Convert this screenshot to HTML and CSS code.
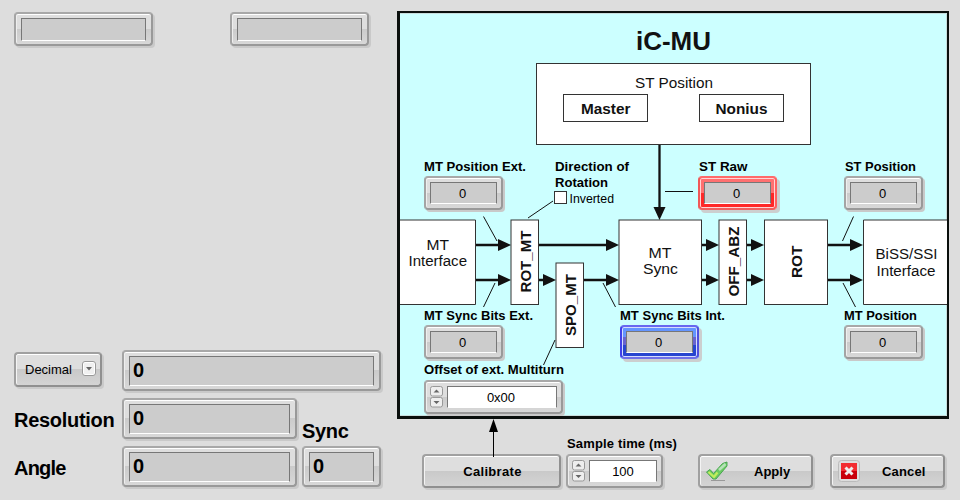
FILE: index.html
```html
<!DOCTYPE html>
<html lang="en">
<head>
<meta charset="utf-8">
<title>iC-MU Calibration</title>
<link rel="stylesheet" href="styles.css">
</head>
<body>
<main class="window">
  <section class="readouts">
    <div class="row top-row">
      <div class="field wide"><div class="inset"></div></div>
      <div class="field wide"><div class="inset"></div></div>
    </div>
    <div class="row format-row">
      <button class="btn format">Decimal
        <svg class="drop" width="14" height="15" viewBox="0 0 14 15"><rect x=".5" y=".5" width="13" height="14" rx="2.5" fill="#fff" stroke="#999"/><rect x="2" y="2" width="10" height="11" rx="1" fill="#f0f0f0"/><path d="M4 6h6l-3 3.5z" fill="#666"/></svg>
      </button>
      <div class="field big full"><div class="inset">0</div></div>
    </div>
    <div class="row resolution-row">
      <h2 class="caption resolution">Resolution</h2>
      <div class="field big medium"><div class="inset">0</div></div>
      <h2 class="caption sync">Sync</h2>
    </div>
    <div class="row angle-row">
      <h2 class="caption angle">Angle</h2>
      <div class="field big medium"><div class="inset">0</div></div>
      <div class="field big small"><div class="inset">0</div></div>
    </div>
  </section>

  <section class="right">
    <div class="diagram">
      <svg class="wiring" width="552" height="408" viewBox="397 11 552 408">
        <defs>
          <path id="head" d="M0 0L-13-6V6z" fill="#111"/>
        </defs>
        <rect x="397" y="11" width="552" height="408" fill="#0a0f0d"/>
        <rect x="400" y="13" width="547" height="403" fill="#cff"/>
        <path d="M400 13.5H946.500V415.500H400" fill="none" stroke="#c8dedd"/>
        <g class="box">
          <rect x="536.5" y="63.500" width="274" height="81"/>
          <rect x="563.500" y="94.500" width="84" height="27"/>
          <rect x="699.500" y="94.500" width="84" height="27"/>
          <path d="M400 220H475.500V304.500H400"/>
          <rect x="511" y="220" width="27.500" height="84.500"/>
          <rect x="556" y="263" width="27.500" height="84.500"/>
          <rect x="619" y="220" width="82.500" height="84.500"/>
          <rect x="719" y="220" width="27.500" height="84.500"/>
          <rect x="764.500" y="220" width="63" height="84.500"/>
          <path d="M947 220H863.500V304.500H947"/>
        </g>
        <path class="bus" d="M476 245H500M539 245H610M702 245H708M747 245H753M828 245H853M476 280H500M539 280H545M584 280H610M702 280H708M747 280H753M828 280H853M659.500 145V208"/>
        <use href="#head" x="511" y="245"/><use href="#head" x="619" y="245"/><use href="#head" x="719" y="245"/><use href="#head" x="764" y="245"/><use href="#head" x="863" y="245"/>
        <use href="#head" x="511" y="280"/><use href="#head" x="556" y="280"/><use href="#head" x="619" y="280"/><use href="#head" x="719" y="280"/><use href="#head" x="764" y="280"/><use href="#head" x="863" y="280"/>
        <use href="#head" transform="translate(659.500 220) rotate(90)"/>
        <path class="lead" d="M483.500 216.500L497 241M553 201L528 218M665 191.500H693M495 283L483.500 307M603 283L615.500 307M853.500 216.500L842.500 241M843 283L855.500 307M555 340L543.500 365"/>
        <g class="block">
          <text x="636" y="50" class="title" textLength="75" lengthAdjust="spacingAndGlyphs">iC-MU</text>
          <text x="635" y="88" textLength="78" lengthAdjust="spacingAndGlyphs">ST Position</text>
          <text x="426.500" y="250" textLength="22.500" lengthAdjust="spacingAndGlyphs">MT</text>
          <text x="408.500" y="266" textLength="58.500" lengthAdjust="spacingAndGlyphs">Interface</text>
          <text x="648.500" y="258" textLength="23" lengthAdjust="spacingAndGlyphs">MT</text>
          <text x="643" y="274" textLength="35" lengthAdjust="spacingAndGlyphs">Sync</text>
          <text x="875.500" y="259" textLength="62" lengthAdjust="spacingAndGlyphs">BiSS/SSI</text>
          <text x="876.500" y="276" textLength="59" lengthAdjust="spacingAndGlyphs">Interface</text>
        </g>
        <g class="block strong">
          <text x="581" y="114" textLength="49.500" lengthAdjust="spacingAndGlyphs">Master</text>
          <text x="715.500" y="114" textLength="52" lengthAdjust="spacingAndGlyphs">Nonius</text>
          <text transform="translate(531 292.500) rotate(-90)" textLength="62" lengthAdjust="spacingAndGlyphs">ROT_MT</text>
          <text transform="translate(576 336) rotate(-90)" textLength="62" lengthAdjust="spacingAndGlyphs">SPO_MT</text>
          <text transform="translate(738.500 296.500) rotate(-90)" textLength="70" lengthAdjust="spacingAndGlyphs">OFF_ABZ</text>
          <text transform="translate(801.500 278) rotate(-90)" textLength="32.500" lengthAdjust="spacingAndGlyphs">ROT</text>
        </g>
        <g class="label">
          <text x="424" y="171" textLength="102" lengthAdjust="spacingAndGlyphs">MT Position Ext.</text>
          <text x="555" y="171" textLength="74" lengthAdjust="spacingAndGlyphs">Direction of</text>
          <text x="555" y="187" textLength="53" lengthAdjust="spacingAndGlyphs">Rotation</text>
          <text x="699" y="171" textLength="48.500" lengthAdjust="spacingAndGlyphs">ST Raw</text>
          <text x="845" y="171" textLength="71" lengthAdjust="spacingAndGlyphs">ST Position</text>
          <text x="424" y="320" textLength="109" lengthAdjust="spacingAndGlyphs">MT Sync Bits Ext.</text>
          <text x="620" y="320" textLength="105" lengthAdjust="spacingAndGlyphs">MT Sync Bits Int.</text>
          <text x="844" y="320" textLength="73" lengthAdjust="spacingAndGlyphs">MT Position</text>
          <text x="424" y="374" textLength="140" lengthAdjust="spacingAndGlyphs">Offset of ext. Multiturn</text>
        </g>
        <rect x="554.500" y="191.500" width="12" height="12" fill="#fff" stroke="#333"/>
        <text class="check-label" x="569.500" y="203" textLength="44.500" lengthAdjust="spacingAndGlyphs">Inverted</text>
      </svg>
      <div class="field node mt-pos-ext"><div class="inset">0</div></div>
      <div class="field node st-raw red"><div class="inset">0</div></div>
      <div class="field node st-pos"><div class="inset">0</div></div>
      <div class="field node mt-sync-ext"><div class="inset">0</div></div>
      <div class="field node mt-sync-int blue"><div class="inset">0</div></div>
      <div class="field node mt-pos"><div class="inset">0</div></div>
      <div class="field node offset editable">
        <svg class="spin" width="13" height="22" viewBox="0 0 13 22"><g fill="#eee" stroke="#999"><rect x=".5" y=".5" width="12" height="9.500" rx="2"/><rect x=".5" y="11.500" width="12" height="9.500" rx="2"/></g><path d="M3.500 6.500h6l-3-3zM3.500 15h6l-3 3z" fill="#666"/></svg>
        <div class="inset">0x00</div>
      </div>
    </div>
    <div class="toolbar">
      <button class="btn calibrate">Calibrate</button>
      <div class="sample">
        <div class="sample-label">Sample time (ms)</div>
        <div class="field editable sample-field">
          <svg class="spin" width="13" height="22" viewBox="0 0 13 22"><g fill="#eee" stroke="#999"><rect x=".5" y=".5" width="12" height="9.500" rx="2"/><rect x=".5" y="11.500" width="12" height="9.500" rx="2"/></g><path d="M3.500 6.500h6l-3-3zM3.500 15h6l-3 3z" fill="#666"/></svg>
          <div class="inset">100</div>
        </div>
      </div>
      <button class="btn apply">
        <svg width="24" height="22" viewBox="0 0 24 22"><path d="M6 20.500H20" stroke="#999" stroke-width="1"/><path d="M1.500 12L5 9.500L8.500 13.500L17.500 3.500L22 2V6L11 19H8z" fill="#6bcb62" stroke="#4aa552"/><path d="M3.500 12L9 17L12.500 12.500" fill="none" stroke="#c2ee5c" stroke-width="2.200"/><path d="M14 10L20.500 4" stroke="#b5e2b8" stroke-width="2.500"/></svg>
        <span>Apply</span>
      </button>
      <button class="btn cancel">
        <svg width="22" height="22" viewBox="0 0 22 22"><rect x=".5" y=".5" width="21" height="21" rx="3" fill="#ddd" stroke="#bbb"/><rect x="3" y="3" width="16" height="16" fill="#c9000b"/><rect x="3" y="3" width="16" height="8" fill="#f22c31"/><path d="M7.500 7.500L14.500 14.500M14.500 7.500L7.500 14.500" stroke="#eee" stroke-width="3"/></svg>
        <span>Cancel</span>
      </button>
      <svg class="up-arrow" width="12" height="38" viewBox="0 0 12 38"><path d="M6.500 8V38" stroke="#000"/><path d="M6.500 0L11 13H2z"/></svg>
    </div>
  </section>
</main>
</body>
</html>
```
FILE: styles.css
```css
* { box-sizing: border-box; }
body {
  margin: 0;
  background: #ddd;
  color: #000;
  font-family: "Liberation Sans", Arial, sans-serif;
  font-size: 13px;
}
.window {
  display: flex;
  width: 960px;
  height: 500px;
  overflow: hidden;
}
.readouts {
  width: 397px;
  flex: none;
  padding: 12px 0 0 14px;
}
.row { display: flex; }
.top-row { gap: 77px; height: 338px; align-items: flex-start; }
.format-row { gap: 20px; height: 48px; align-items: flex-start; }
.format-row .btn { margin-top: 2px; }
.resolution-row { height: 48px; }
.angle-row { height: 42px; }

/* Raised frame with a sunken value area */
.field {
  display: flex;
  flex: none;
  height: 34px;
  padding: 4px 5px 3px;
  border: 2px solid #a4a4a4;
  border-color: #a8a8a8 #999 #999 #a4a4a4;
  border-radius: 4px;
  background: linear-gradient(#dedede 50%, #cbcbcb 50%, #d8d8d8);
  box-shadow: 2px 2px 0 #c9c9c9, inset 0 1px #fff, inset 1px 0 #eee;
}
.inset {
  flex: 1;
  display: flex;
  align-items: center;
  justify-content: center;
  border: 1px solid #777;
  border-bottom-color: #fff;
  background: #ccc;
}
.wide { width: 139px; }
.big { height: 41px; }
.big .inset {
  justify-content: flex-start;
  padding: 0 0 1px 3px;
  font-size: 20px;
  font-weight: bold;
}
.full { width: 259px; }
.medium { width: 175px; }
.small { width: 79px; margin-left: 5px; }

.caption {
  margin: 0;
  width: 108px;
  flex: none;
  font-size: 20px;
  line-height: 24px;
  padding-top: 10px;
}
.resolution { letter-spacing: -.3px; }
.angle { letter-spacing: -.8px; }
.sync { width: 60px; margin-left: 5px; padding-top: 21px; letter-spacing: -.3px; }

.btn {
  display: flex;
  align-items: center;
  flex: none;
  height: 34px;
  padding: 0;
  border: 2px solid #a4a4a4;
  border-color: #a0a0a0 #909090 #909090 #a0a0a0;
  border-radius: 4px;
  background: linear-gradient(#dedede 50%, #c9c9c9 50%, #d4d4d4);
  box-shadow: 2px 2px 0 #cacaca, inset 0 1px #fff, inset 1px 0 #f4f4f4;
  color: #000;
  font: bold 13px "Liberation Sans", Arial, sans-serif;
}
.format {
  width: 88px;
  height: 35px;
  padding: 0 4px 0 9px;
  justify-content: space-between;
  font-weight: normal;
}
.drop { margin-bottom: 3px; }

.right { width: 563px; flex: none; padding-top: 11px; }
.diagram { position: relative; width: 552px; height: 408px; }
.wiring { display: block; }
.box { fill: #fff; stroke: #333; }
.bus { fill: none; stroke: #111; stroke-width: 2.3; }
.lead { fill: none; stroke: #111; stroke-width: 1; }
.block { font-size: 15.5px; fill: #111; }
.strong { font-weight: bold; }
.block .title { font-size: 26px; font-weight: bold; }
.label { font-size: 13px; font-weight: bold; }
.check-label { font-size: 13px; }

/* Indicators placed on the diagram canvas */
.node {
  position: absolute;
  width: 79px;
  height: 34px;
  padding: 4px 4px 4px;
}
.node .inset { padding-right: 2px; }
.mt-pos-ext { left: 27px; top: 165px; }
.st-raw { left: 301px; top: 165px; }
.st-pos { left: 447px; top: 165px; }
.mt-sync-ext { left: 27px; top: 314px; }
.mt-sync-int { left: 223px; top: 314px; }
.mt-pos { left: 447px; top: 314px; }
.offset { left: 27px; top: 369px; width: 139px; }
.red {
  border-color: #ff6a6a #ff6060 #f06060 #f05858;
  background: linear-gradient(#ff7070 50%, #ff2828 50%);
  box-shadow: 3px 3px 0 #cccfcf, inset 0 0 0 1px #ffd5d5;
}
.blue {
  border-color: #6868f0 #5050e0 #7070e8 #4040e8;
  background: linear-gradient(#6495ff 35%, #6863cf 35% 60%, #2745d0 60%);
  box-shadow: 3px 3px 0 #cccfcf, inset 0 0 0 1px #d5dcff;
}
.editable { gap: 4px; }
.editable .inset { background: #fff; }
.spin { flex: none; }

.toolbar {
  position: relative;
  display: flex;
  align-items: flex-start;
  height: 81px;
  padding: 35px 0 0 25px;
}
.calibrate { width: 139px; padding: 1px 0 0 2px; justify-content: center; letter-spacing: .3px; }
.sample { width: 97px; margin: -19px 35px 0 5px; }
.sample-label {
  height: 19px;
  padding-left: 1px;
  line-height: 18px;
  font-weight: bold;
  white-space: nowrap;
  letter-spacing: .15px;
}
.sample-field { width: 97px; padding: 4px; }
.apply { width: 115px; margin-right: 17px; padding-left: 5px; gap: 25px; }
.cancel { width: 115px; padding-left: 6px; gap: 22px; letter-spacing: .15px; }
.up-arrow { position: absolute; left: 90px; top: 0; }
```
